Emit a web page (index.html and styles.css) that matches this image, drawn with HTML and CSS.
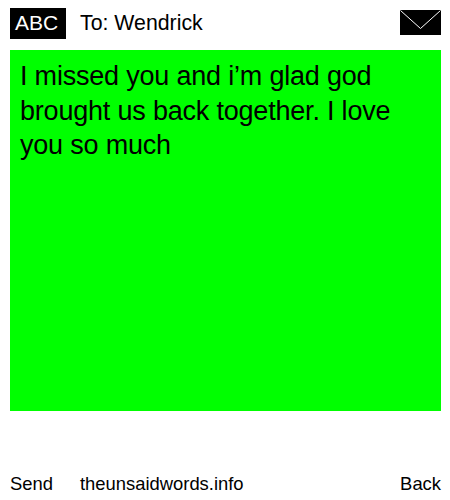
FILE: index.html
```html
<!DOCTYPE html>
<html lang="en">
<head>
<meta charset="UTF-8">
<meta name="viewport" content="width=device-width, initial-scale=1.0">
<title>The Unsaid Words</title>
<link rel="stylesheet" href="styles.css">
</head>
<body>
<div class="page">
  <div class="top-bar">
    <div class="abc">ABC</div>
    <div class="to">To: Wendrick</div>
    <svg class="envelope" width="41" height="25" viewBox="0 0 41 25">
      <rect width="41" height="25" fill="#000"/>
      <path d="M0.5 0.5L20.5 18.5L40.5 0.5" fill="none" stroke="#fff" stroke-width="1"/>
    </svg>
  </div>
  <div class="message">I missed you and i’m glad god brought us back together. I love you so much</div>
  <div class="bottom-bar">
    <span class="send">Send</span>
    <span class="site">theunsaidwords.info</span>
    <span class="back">Back</span>
  </div>
</div>
</body>
</html>
```

FILE: styles.css
```css
body {
  margin: 0;
  background-color: white;
  font-family: "Liberation Sans", Arial, sans-serif;
  color: black;
}
.page {
  width: 431px;
  height: 500px;
  padding-left: 10px;
  display: flex;
  flex-direction: column;
}
.top-bar {
  display: flex;
  align-items: flex-start;
  height: 42px;
  padding-top: 8px;
}
.abc {
  width: 51px;
  height: 31px;
  padding-left: 5px;
  line-height: 30px;
  background-color: black;
  color: white;
  font-size: 21px;
}
.to {
  margin-left: 14px;
  line-height: 30px;
  font-size: 21.3px;
  flex-grow: 1;
}
.envelope {
  margin-top: 2px;
}
.message {
  height: 352px;
  padding: 9px 10px 0;
  background-color: #00ff00;
  font-size: 27px;
  line-height: 34.5px;
  letter-spacing: -0.2px;
}
.bottom-bar {
  display: flex;
  margin-top: 62px;
  font-size: 18.4px;
  line-height: 22px;
}
.send {
  width: 70px;
}
.site {
  flex-grow: 1;
}
```
